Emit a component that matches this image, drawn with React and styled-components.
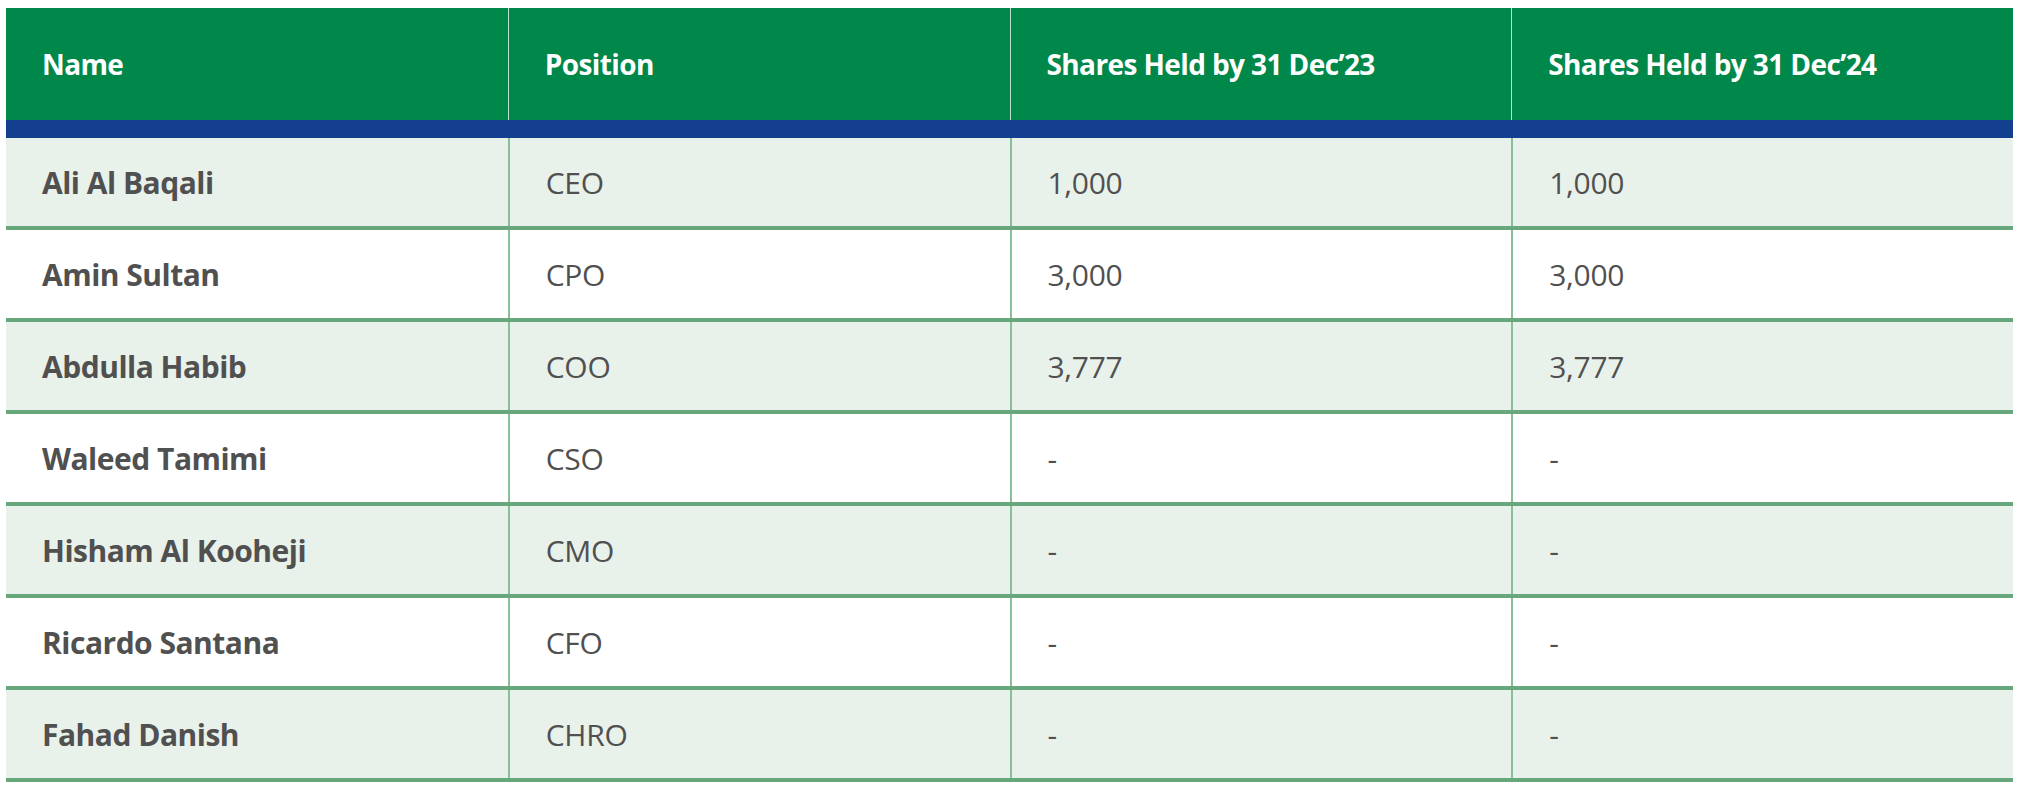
import React from "react";
import styled, { createGlobalStyle } from "styled-components";

const GlobalStyle = createGlobalStyle`
  html, body {
    margin: 0;
    padding: 0;
    background: #ffffff;
  }
  body {
    font-family: "Open Sans", "Noto Sans", "Liberation Sans", sans-serif;
  }
`;

const Page = styled.div`
  padding: 8px 8px 0 6px;
`;

const Table = styled.div`
  width: 2007px;
  display: flex;
  flex-direction: column;
`;

const HeaderRow = styled.div`
  display: grid;
  grid-template-columns: repeat(4, 1fr);
  height: 112px;
  background: #00884a;
`;

const HeadCell = styled.div`
  display: flex;
  align-items: center;
  padding: 0 0 0 36px;
  box-sizing: border-box;
  color: #ffffff;
  font-size: 28px;
  font-weight: 700;
  letter-spacing: -0.6px;
  font-stretch: 90%;
  border-left: ${(p) => (p.$first ? "none" : "1px solid rgba(220, 240, 228, 0.85)")};
`;

const Band = styled.div`
  height: 18px;
  background: #143f8f;
`;

const Row = styled.div`
  display: grid;
  grid-template-columns: repeat(4, 1fr);
  height: 92px;
  box-sizing: border-box;
  border-bottom: 4px solid #68a67b;
  background: ${(p) => (p.$shaded ? "#e9f1eb" : "#ffffff")};
`;

const Cell = styled.div`
  display: flex;
  align-items: center;
  padding: 0 0 0 36px;
  box-sizing: border-box;
  color: #505050;
  font-size: 30px;
  font-weight: ${(p) => (p.$strong ? 700 : 400)};
  letter-spacing: ${(p) => (p.$strong ? "-0.5px" : "-0.3px")};
  font-stretch: 90%;
  border-left: ${(p) => (p.$first ? "none" : "2px solid #86bf98")};
`;

const headers = [
  "Name",
  "Position",
  "Shares Held by 31 Dec\u201923",
  "Shares Held by 31 Dec\u201924",
];

const rows = [
  ["Ali Al Baqali", "CEO", "1,000", "1,000"],
  ["Amin Sultan", "CPO", "3,000", "3,000"],
  ["Abdulla Habib", "COO", "3,777", "3,777"],
  ["Waleed Tamimi", "CSO", "-", "-"],
  ["Hisham Al Kooheji", "CMO", "-", "-"],
  ["Ricardo Santana", "CFO", "-", "-"],
  ["Fahad Danish", "CHRO", "-", "-"],
];

export default function App() {
  return (
    <Page>
      <GlobalStyle />
      <Table>
        <HeaderRow>
          {headers.map((h, i) => (
            <HeadCell key={h} $first={i === 0}>
              {h}
            </HeadCell>
          ))}
        </HeaderRow>
        <Band />
        {rows.map((r, ri) => (
          <Row key={r[0]} $shaded={ri % 2 === 0}>
            {r.map((c, ci) => (
              <Cell key={ci} $first={ci === 0} $strong={ci === 0}>
                {c}
              </Cell>
            ))}
          </Row>
        ))}
      </Table>
    </Page>
  );
}
